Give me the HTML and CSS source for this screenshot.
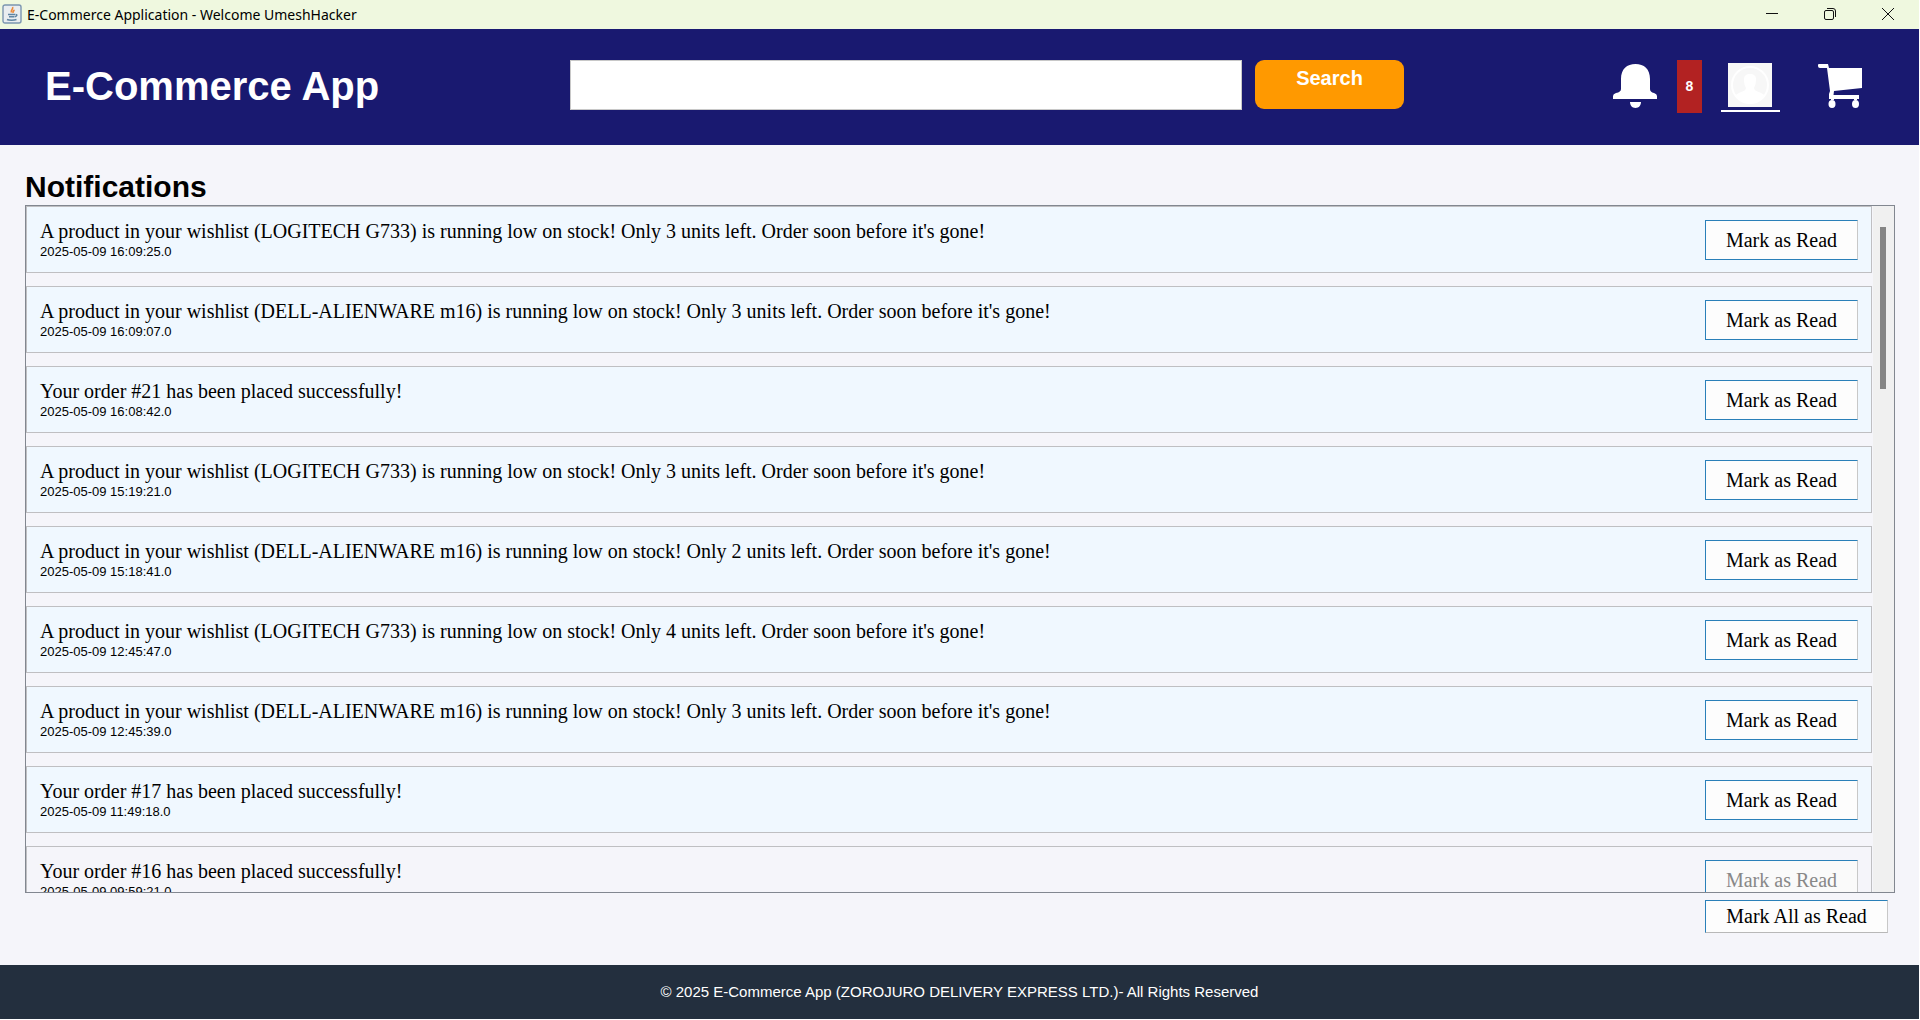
FILE: index.html
```html
<!DOCTYPE html>
<html lang="en">
<head>
<meta charset="utf-8">
<title>E-Commerce Application - Welcome UmeshHacker</title>
<link rel="stylesheet" href="styles.css">
</head>
<body>
<div class="titlebar">
  <svg class="app-icon" viewBox="0 0 20 20" aria-hidden="true">
    <rect x="1" y="1" width="18" height="18" rx="2" fill="#e9edf0" stroke="#7b95b0" stroke-width="1.4"/>
    <path d="M10.5 3c1.5 2-2.500 3-1 5.500M12.500 6c-1.500 1-2 1.500-1.300 3" fill="none" stroke="#ea8a3c" stroke-width="1.600"/>
    <path d="M6 10.500h7M7 12.800h5.500M5 15.500c2 1 7 1 9.500 0M13.500 10.500c2.500 0 1 2-.5 2.300" fill="none" stroke="#5f84a2" stroke-width="1.500"/>
  </svg>
  <span class="window-title">E-Commerce Application - Welcome UmeshHacker</span>
  <div class="window-controls">
    <button type="button" aria-label="Minimize"><svg viewBox="0 0 14 14"><path d="M1 6.500h12"/></svg></button>
    <button type="button" aria-label="Restore"><svg viewBox="0 0 14 14"><rect x="1.500" y="3.500" width="9" height="9" rx="1.500"/><path d="M4 1.500h6a2.500 2.500 0 0 1 2.500 2.500v6"/></svg></button>
    <button type="button" aria-label="Close"><svg viewBox="0 0 14 14"><path d="M1 1l12 12M13 1L1 13"/></svg></button>
  </div>
</div>
<header class="header">
  <h1 class="brand">E-Commerce App</h1>
  <form class="search">
    <input class="search-input" type="text" aria-label="Search products">
    <button class="search-button" type="button">Search</button>
  </form>
  <nav class="actions">
    <a class="bell" href="#" aria-label="Notifications"><svg viewBox="0 0 44 44"><path d="M0 35v-3q0-2 3-3 5-1 5-4V15C8 5 14 0 22.500 0S37 5 37 15v10q0 3 4 4 3 1 3 3v3zM17 38h11c0 3-2 6-5.500 6S17 41 17 38z"/></svg></a>
    <span class="badge">8</span>
    <a class="profile" href="#" aria-label="Profile"><svg viewBox="0 0 44 44"><rect width="44" height="44" fill="#f7f7f7"/><circle cx="22" cy="22" r="18" fill="none" stroke="#fff" stroke-width="2"/><path d="M22 11c4 0 6 2 6 5 0 5-1 7-2 9 0 4 9 4 11 8-7 10-23 10-30 0 2-4 11-4 11-8-1-2-2-4-2-9 0-3 2-5 6-5z" fill="#fff"/></svg></a>
    <a class="cart" href="#" aria-label="Cart"><svg viewBox="0 0 44 44"><path d="M0 1q0-1 1-1h9l1 4h33v20L16 27l-.5 4H41v4h-2v1h-3v-1H16v1h-3v-1h-2v-5l1-3L9 4H2Q0 4 0 2z"/><ellipse cx="14" cy="40" rx="3.500" ry="4"/><ellipse cx="37.500" cy="40" rx="3.500" ry="4"/></svg></a>
  </nav>
</header>
<main class="content">
  <h2 class="heading">Notifications</h2>
  <div class="panel">
    <ul class="list">
      <li class="item"><div><p class="message">A product in your wishlist (LOGITECH G733) is running low on stock! Only 3 units left. Order soon before it's gone!</p><time>2025-05-09 16:09:25.0</time></div><button class="mark" type="button">Mark as Read</button></li>
      <li class="item"><div><p class="message">A product in your wishlist (DELL-ALIENWARE m16) is running low on stock! Only 3 units left. Order soon before it's gone!</p><time>2025-05-09 16:09:07.0</time></div><button class="mark" type="button">Mark as Read</button></li>
      <li class="item"><div><p class="message">Your order #21 has been placed successfully!</p><time>2025-05-09 16:08:42.0</time></div><button class="mark" type="button">Mark as Read</button></li>
      <li class="item"><div><p class="message">A product in your wishlist (LOGITECH G733) is running low on stock! Only 3 units left. Order soon before it's gone!</p><time>2025-05-09 15:19:21.0</time></div><button class="mark" type="button">Mark as Read</button></li>
      <li class="item"><div><p class="message">A product in your wishlist (DELL-ALIENWARE m16) is running low on stock! Only 2 units left. Order soon before it's gone!</p><time>2025-05-09 15:18:41.0</time></div><button class="mark" type="button">Mark as Read</button></li>
      <li class="item"><div><p class="message">A product in your wishlist (LOGITECH G733) is running low on stock! Only 4 units left. Order soon before it's gone!</p><time>2025-05-09 12:45:47.0</time></div><button class="mark" type="button">Mark as Read</button></li>
      <li class="item"><div><p class="message">A product in your wishlist (DELL-ALIENWARE m16) is running low on stock! Only 3 units left. Order soon before it's gone!</p><time>2025-05-09 12:45:39.0</time></div><button class="mark" type="button">Mark as Read</button></li>
      <li class="item"><div><p class="message">Your order #17 has been placed successfully!</p><time>2025-05-09 11:49:18.0</time></div><button class="mark" type="button">Mark as Read</button></li>
      <li class="item read"><div><p class="message">Your order #16 has been placed successfully!</p><time>2025-05-09 09:59:21.0</time></div><button class="mark" type="button" disabled>Mark as Read</button></li>
    </ul>
    <div class="scrollbar"><div class="thumb"></div></div>
  </div>
  <button class="mark mark-all" type="button">Mark All as Read</button>
</main>
<footer class="footer">© 2025 E-Commerce App (ZOROJURO DELIVERY EXPRESS LTD.)- All Rights Reserved</footer>
</body>
</html>
```
FILE: styles.css
```css
* { box-sizing: border-box; }
body {
  margin: 0;
  height: 100vh;
  display: flex;
  flex-direction: column;
  border: solid #fff;
  border-width: 0 1px 1px 0;
  background: #f5f5fa;
  color: #000;
  font-family: "Liberation Sans", Arial, sans-serif;
}
button { font: inherit; cursor: pointer; }
h1, h2, p, ul { margin: 0; padding: 0; }
svg { display: block; }

.titlebar {
  flex: none;
  height: 29px;
  padding: 0 2px;
  display: flex;
  align-items: center;
  background: #eff8df;
  font: 14px/20px "Noto Sans", "Open Sans", sans-serif;
}
.app-icon { width: 20px; height: 20px; margin: -2px 5px 0 0; }
.window-controls { margin-left: auto; display: flex; }
.window-controls button {
  width: 58px;
  height: 29px;
  padding: 0 0 2px;
  border: 0;
  background: none;
  display: flex;
  align-items: center;
  justify-content: center;
}
.window-controls svg { width: 14px; height: 14px; fill: none; stroke: #111; stroke-width: 1; }

.header {
  flex: none;
  height: 116px;
  padding: 0 57px 0 45px;
  display: grid;
  grid-template-columns: minmax(0, 525fr) 834px minmax(0, 458fr);
  align-items: center;
  background: #191970;
  color: #fff;
}
.brand { font-size: 40px; line-height: 48px; padding-bottom: 2px; }
.search { display: flex; gap: 13px; height: 50px; margin-bottom: 4px; }
.search-input { flex: 1; min-width: 0; border: 1px solid #c8c8c8; background: #fff; padding: 0 8px; font-size: 18px; }
.search-button {
  width: 149px;
  height: 49px;
  border: 0;
  border-radius: 9px;
  background: #ff9900;
  color: #fff;
  font-size: 20px;
  font-weight: 700;
  line-height: 24px;
  padding: 0 0 14px;
}
.actions { display: flex; justify-content: flex-end; align-items: center; fill: #fff; padding-bottom: 2px; }
.actions svg { width: 44px; height: 44px; }
.badge {
  width: 25px;
  height: 53px;
  margin: 0 19px 0 20px;
  display: flex;
  align-items: center;
  justify-content: center;
  background: #b22222;
  font-size: 14px;
  font-weight: 700;
}
.profile { padding: 3px 8px 3px 7px; border-bottom: 2px solid #fff; }
.cart { margin-left: 38px; }

.content { flex: 1; min-height: 0; padding: 24px 24px 32px 25px; display: flex; flex-direction: column; }
.heading { font-size: 30px; line-height: 36px; }
.panel { flex: 1; min-height: 0; display: flex; border: 1px solid #828790; overflow: hidden; }
.list { flex: 1; list-style: none; }
.item {
  height: 67px;
  margin-bottom: 13px;
  padding: 12px 13px;
  display: flex;
  justify-content: space-between;
  align-items: flex-start;
  border: 1px solid #bfbfc2;
  background: #f0f8ff;
}
.item.read { background: none; }
.message { font: 20px/24px "Liberation Serif", serif; }
time { display: block; font-size: 13px; line-height: 18px; }
.mark {
  width: 153px;
  height: 40px;
  margin-top: 1px;
  padding: 0;
  border: 1px solid #2a80b9;
  border-right-color: #c8c8c8;
  background: linear-gradient(#fdfdfd, #fdfdfd) padding-box, #2a80b9;
  color: #000;
  font: 20px/24px "Liberation Serif", serif;
}
.mark:disabled { color: #888; background: #fafafa; }
.mark-all { align-self: flex-end; width: 183px; height: 33px; margin: 7px 7px 0 0; padding-bottom: 2px; border-bottom-color: #b8b8b8; }
.scrollbar { width: 21px; margin-left: 1px; padding: 21px 8px 0 7px; background: #f0f0f0; }
.thumb { height: 162px; background: #858585; }

.footer {
  flex: none;
  height: 54px;
  padding-bottom: 2px;
  display: flex;
  align-items: center;
  justify-content: center;
  background: #232f3e;
  color: #fff;
  font-size: 15px;
}
```
